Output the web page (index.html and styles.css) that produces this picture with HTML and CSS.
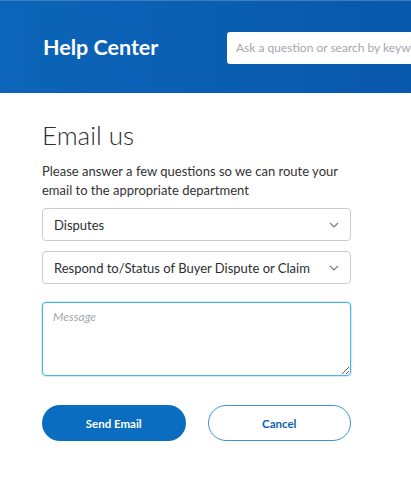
FILE: index.html
```html
<!DOCTYPE html>
<html lang="en">
<head>
    <meta charset="UTF-8">
    <meta name="viewport" content="width=device-width, initial-scale=1.0">
    <title>Help Center - Email us</title>
    <link rel="stylesheet" href="styles.css">
</head>
<body>
    <header class="hero">
        <h1 class="hero-title">Help Center</h1>
        <input type="text" class="search" placeholder="Ask a question or search by keyword">
    </header>

    <main class="content">
        <h2 class="page-title">Email us</h2>
        <p class="intro">Please answer a few questions so we can route your email to the appropriate department</p>

        <form class="email-form">
            <div class="select-wrap">
                <select class="select">
                    <option>Disputes</option>
                </select>
                <svg class="chevron" viewBox="0 0 10 6" width="10" height="6"><path d="M1 1l4 4 4-4" fill="none" stroke="#777" stroke-width="1.1"/></svg>
            </div>
            <div class="select-wrap">
                <select class="select">
                    <option>Respond to/Status of Buyer Dispute or Claim</option>
                </select>
                <svg class="chevron" viewBox="0 0 10 6" width="10" height="6"><path d="M1 1l4 4 4-4" fill="none" stroke="#777" stroke-width="1.1"/></svg>
            </div>
            <textarea class="message" placeholder="Message"></textarea>

            <div class="actions">
                <button type="button" class="btn btn-primary">Send Email</button>
                <button type="button" class="btn btn-secondary">Cancel</button>
            </div>
        </form>
    </main>
</body>
</html>
```

FILE: styles.css
```css
* {
    box-sizing: border-box;
    margin: 0;
    padding: 0;
}

body {
    font-family: Lato, "Open Sans", sans-serif;
    background: #fff;
    color: #2c2e2f;
    width: 411px;
    overflow: hidden;
}

/* Header */
.hero {
    height: 93px;
    background: linear-gradient(to right, #0c65b8, #0858ad);
    border-top: 1px solid #3a7fc6;
    display: flex;
    align-items: center;
    padding-left: 43px;
    overflow: hidden;
}

.hero-title {
    flex: 0 0 184px;
    color: #fff;
    font-size: 21.5px;
    font-weight: 700;
    white-space: nowrap;
}

.search {
    flex: 0 0 220px;
    height: 32px;
    margin-top: 1px;
    border: none;
    border-radius: 3px 0 0 3px;
    padding: 0 9px;
    font-family: inherit;
    font-size: 12px;
    color: #333;
    background: #fff;
}

.search::placeholder {
    color: #a4a7aa;
}

/* Content */
.content {
    padding: 26px 60px 0 42px;
}

.page-title {
    font-size: 26px;
    font-weight: 300;
    color: #2c2e2f;
    line-height: 32px;
}

.intro {
    margin-top: 11px;
    font-size: 13px;
    line-height: 19px;
    color: #333;
}

.email-form {
    margin-top: 8px;
    display: flex;
    flex-direction: column;
    gap: 10px;
}

.select-wrap {
    position: relative;
}

.select {
    appearance: none;
    width: 100%;
    height: 33px;
    border: 1px solid #c9cbcd;
    border-radius: 4px;
    background: #fff;
    padding: 0 30px 0 11px;
    font-family: inherit;
    font-size: 13px;
    color: #2c2e2f;
}

.chevron {
    position: absolute;
    right: 12px;
    top: 14px;
    pointer-events: none;
}

.message {
    margin-top: 8px;
    height: 74px;
    border: 1px solid #4db4e6;
    border-radius: 4px;
    padding: 6px 10px;
    font-family: inherit;
    font-size: 12px;
    resize: vertical;
    box-shadow: 0 0 0 1px rgba(77, 180, 230, 0.25);
}

.message::placeholder {
    color: #a4a7aa;
    font-style: italic;
}

.actions {
    margin-top: 19px;
    display: flex;
    gap: 22px;
}

.btn {
    width: 144px;
    height: 36px;
    border-radius: 18px;
    font-family: inherit;
    font-size: 11.5px;
    font-weight: 700;
    cursor: pointer;
}

.btn-primary {
    background: #0a6dc0;
    color: #fff;
    border: none;
}

.btn-secondary {
    background: #fff;
    color: #0a5fb0;
    border: 1px solid #3b93d8;
}
```
